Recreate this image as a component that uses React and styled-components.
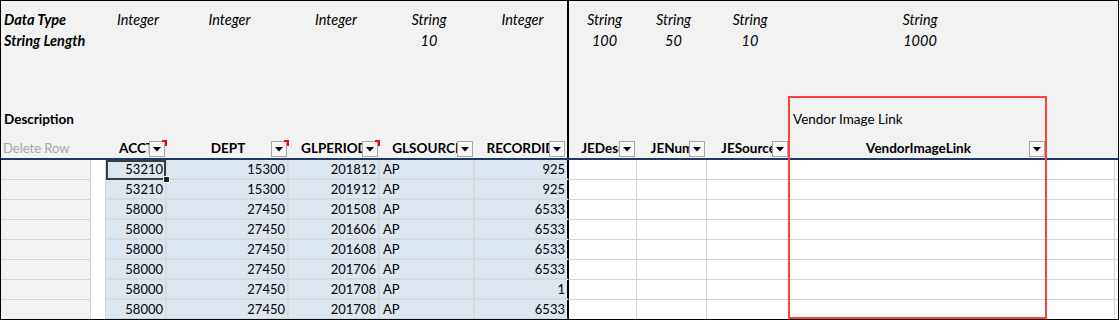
import styled, { createGlobalStyle } from "styled-components";

const COLS = [
    { key: "del", w: 90 },
    { key: "gap", w: 15 },
    { key: "ACCT", w: 61, type: "Integer", blue: true, note: true },
    { key: "DEPT", w: 122, type: "Integer", blue: true, note: true },
    { key: "GLPERIOD", w: 91, type: "Integer", blue: true, note: true },
    { key: "GLSOURCE", w: 95, type: "String", len: "10", blue: true, text: true },
    { key: "RECORDID", w: 94, type: "Integer", blue: true, edge: true },
    { key: "JEDesc", w: 68, type: "String", len: "100" },
    { key: "JENum", w: 70, type: "String", len: "50" },
    { key: "JESource", w: 83, type: "String", len: "10" },
    { key: "VendorImageLink", w: 257, type: "String", len: "1000", desc: "Vendor Image Link" },
    { key: "extra", w: 68 },
];

const TEMPLATE = COLS.map((c) => c.w + "px").join(" ") + " 1fr";

const ROWS = [
    { ACCT: "53210", DEPT: "15300", GLPERIOD: "201812", GLSOURCE: "AP", RECORDID: "925" },
    { ACCT: "53210", DEPT: "15300", GLPERIOD: "201912", GLSOURCE: "AP", RECORDID: "925" },
    { ACCT: "58000", DEPT: "27450", GLPERIOD: "201508", GLSOURCE: "AP", RECORDID: "6533" },
    { ACCT: "58000", DEPT: "27450", GLPERIOD: "201606", GLSOURCE: "AP", RECORDID: "6533" },
    { ACCT: "58000", DEPT: "27450", GLPERIOD: "201608", GLSOURCE: "AP", RECORDID: "6533" },
    { ACCT: "58000", DEPT: "27450", GLPERIOD: "201706", GLSOURCE: "AP", RECORDID: "6533" },
    { ACCT: "58000", DEPT: "27450", GLPERIOD: "201708", GLSOURCE: "AP", RECORDID: "1" },
    { ACCT: "58000", DEPT: "27450", GLPERIOD: "201708", GLSOURCE: "AP", RECORDID: "6533" },
];

const META = [
    { h: 29, bottom: true, label: "Data Type", italic: true, value: (c) => c.type },
    { h: 21, label: "String Length", italic: true, value: (c) => c.len },
    { h: 88, bottom: true, pb: 10, label: "Description", value: (c) => c.desc },
];

const App = () => {
    return (
        <>
            <GlobalStyle />
            <Sheet>
                <HeaderBlock>
                    {META.map((row) => (
                        <MetaRow key={row.label} $h={row.h}>
                            {COLS.map((c) => {
                                const isLabel = c.key === "del";
                                const value = isLabel ? row.label : row.value(c);
                                return (
                                    <MetaCell
                                        key={c.key}
                                        $bottom={row.bottom}
                                        $pb={row.pb}
                                        $edge={c.edge}
                                        $left={isLabel || !row.italic}
                                    >
                                        {value && (
                                            <MetaText $bold={isLabel} $italic={row.italic}>
                                                {value}
                                            </MetaText>
                                        )}
                                    </MetaCell>
                                );
                            })}
                            <MetaCell />
                        </MetaRow>
                    ))}

                    <HeadRow>
                        {COLS.map((c) => {
                            if (c.key === "del") return <HeadCell key={c.key}><DeleteLabel>Delete Row</DeleteLabel></HeadCell>;
                            if (c.key === "gap" || c.key === "extra") return <HeadCell key={c.key} />;
                            return (
                                <HeadCell key={c.key} $edge={c.edge}>
                                    <HeadTitle>{c.key}</HeadTitle>
                                    <DropButton>
                                        <svg width="8" height="5" viewBox="0 0 8 5">
                                            <polygon points="0,0 8,0 4,4.5" fill="#000" />
                                        </svg>
                                    </DropButton>
                                    {c.note && <NoteMark />}
                                </HeadCell>
                            );
                        })}
                        <HeadCell />
                    </HeadRow>
                </HeaderBlock>

                {ROWS.map((r, i) => (
                    <DataRow key={i}>
                        {COLS.map((c) => (
                            <DataCell
                                key={c.key}
                                $kind={c.key === "del" ? "del" : c.key === "gap" ? "gap" : c.blue ? "blue" : "plain"}
                                $edge={c.edge}
                                $text={c.text}
                                $selected={i === 0 && c.key === "ACCT"}
                            >
                                {r[c.key]}
                            </DataCell>
                        ))}
                        <DataCell $kind="filler" />
                    </DataRow>
                ))}

                <ShapeOutline />
            </Sheet>
        </>
    );
};

const GlobalStyle = createGlobalStyle`
    body {
        margin: 0;
        background: #fff;
    }
`;

const Sheet = styled.div`
    position: relative;
    width: 1119px;
    height: 320px;
    box-sizing: border-box;
    border: 1px solid #000;
    overflow: hidden;
    background: #fff;
    font-family: Lato, "Liberation Sans", sans-serif;
    font-size: 13px;
    color: #000;
`;

const HeaderBlock = styled.div`
    background: #f2f2f2;
`;

const MetaRow = styled.div`
    display: grid;
    grid-template-columns: ${TEMPLATE};
    height: ${(p) => p.$h}px;
`;

const MetaCell = styled.div`
    display: flex;
    align-items: ${(p) => (p.$bottom ? "flex-end" : "center")};
    justify-content: ${(p) => (p.$left ? "flex-start" : "center")};
    padding: 0 0 ${(p) => p.$pb || 0}px 3px;
    box-sizing: border-box;
    border-right: ${(p) => (p.$edge ? "2px solid #000" : "none")};
    white-space: nowrap;
    overflow: visible;
`;

const MetaText = styled.span`
    line-height: 20px;
    font-size: ${(p) => (p.$italic ? "14.5px" : "13.5px")};
    font-weight: ${(p) => (p.$bold ? 700 : 400)};
    font-style: ${(p) => (p.$italic ? "italic" : "normal")};
`;

const HeadRow = styled.div`
    display: grid;
    grid-template-columns: ${TEMPLATE};
    height: 21px;
    box-sizing: border-box;
    border-bottom: 2px solid #1f3864;
`;

const HeadCell = styled.div`
    position: relative;
    display: flex;
    align-items: center;
    justify-content: center;
    box-sizing: border-box;
    border-right: ${(p) => (p.$edge ? "2px solid #000" : "none")};
    overflow: hidden;
    white-space: nowrap;
`;

const DeleteLabel = styled.span`
    width: 100%;
    padding-left: 2px;
    color: #a6a6a6;
    line-height: 19px;
`;

const HeadTitle = styled.span`
    font-weight: 700;
    font-size: 13.5px;
    line-height: 19px;
`;

const DropButton = styled.div`
    position: absolute;
    right: 2px;
    bottom: 1px;
    width: 16px;
    height: 16px;
    box-sizing: border-box;
    border: 1px solid #a6a6a6;
    background: #f7f7f7;
    display: flex;
    align-items: center;
    justify-content: center;
`;

const NoteMark = styled.div`
    position: absolute;
    top: 1px;
    right: 0;
    width: 5px;
    height: 6px;
    box-sizing: border-box;
    border-top: 2px solid #ff0000;
    border-right: 2px solid #ff0000;
`;

const DataRow = styled.div`
    display: grid;
    grid-template-columns: ${TEMPLATE};
    height: 20px;
`;

const cellLook = {
    del: "background: #f2f2f2; border-right: 1px solid #d4d4d4; border-bottom: 1px solid #d4d4d4;",
    gap: "background: #fff; border-right: 1px solid #d4d4d4;",
    blue: "background: #dce6f1; border-right: 2px solid #d9d9d9; border-bottom: 2px solid #d9d9d9;",
    plain: "background: #fff; border-right: 1px solid #d4d4d4; border-bottom: 1px solid #d4d4d4;",
    filler: "background: #fff; border-bottom: 1px solid #d4d4d4;",
};

const DataCell = styled.div`
    position: relative;
    box-sizing: border-box;
    display: flex;
    align-items: center;
    justify-content: ${(p) => (p.$text ? "flex-start" : "flex-end")};
    padding: 0 2px 0 3px;
    line-height: 18px;
    white-space: nowrap;
    ${(p) => cellLook[p.$kind]}
    ${(p) => p.$edge && "border-right: 2px solid #000;"}

    ${(p) =>
        p.$selected &&
        `
        &::after {
            content: "";
            position: absolute;
            top: 0;
            left: 0;
            right: -1px;
            bottom: -2px;
            border: 2px solid #3c3c3c;
        }
        &::before {
            content: "";
            position: absolute;
            right: -5px;
            bottom: -5px;
            width: 5px;
            height: 5px;
            background: #222;
            border: 1px solid #fff;
            z-index: 2;
        }
    `}
`;

const ShapeOutline = styled.div`
    position: absolute;
    left: 787px;
    top: 95px;
    bottom: 0;
    width: 259px;
    box-sizing: border-box;
    border: 2px solid #ff4040;
    pointer-events: none;
`;

export default App;
